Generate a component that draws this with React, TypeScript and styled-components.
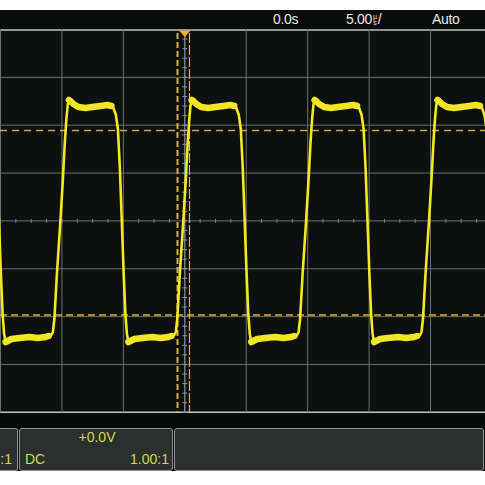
import React from "react";
import styled, { createGlobalStyle } from "styled-components";

const GlobalStyle = createGlobalStyle`
  html, body {
    margin: 0;
    padding: 0;
    background: #ffffff;
  }
`;

const SCREEN_W = 485;
const SCREEN_H = 385;
const DIV_X = 61.43;
const DIV_Y = 47.85;
const PERIOD = DIV_X * 2;

const StyledScope = styled.div`
  width: 485px;
  height: 485px;
  overflow: hidden;
  padding-top: 10px;
  box-sizing: border-box;
  background: #ffffff;
  font-family: "Liberation Sans", Arial, sans-serif;
`;

const StatusBar = styled.header`
  height: 19px;
  background: #0a0b0b;
  display: grid;
  grid-template-columns: 273px 73px 86px 1fr;
  align-items: center;
  color: #e8e8e8;
  font-size: 14px;
  line-height: 19px;

  > span {
    display: inline-flex;
    align-items: center;
    letter-spacing: -0.3px;
  }
`;

const UnitStack = styled.span`
  display: inline-flex;
  flex-direction: column;
  align-items: center;
  font-size: 7px;
  line-height: 6.5px;
  margin: 1px 1px 0 1px;
`;

const Screen = styled.svg`
  display: block;
  background: #0c100f;
`;

const Footer = styled.div`
  background: #080909;
  padding-top: 14px;
`;

const ChannelRow = styled.div`
  display: flex;
  gap: 1px;
  height: 43px;
`;

const ChannelBox = styled.div<{ $width?: number; $cut?: boolean }>`
  box-sizing: border-box;
  ${({ $width }) => ($width ? `width: ${$width}px;` : "flex: 1; margin-right: 1px;")}
  background: #2b2f2e;
  border: 1px solid #8d9292;
  border-left: ${({ $cut }) => ($cut ? "none" : "1px solid #8d9292")};
  border-radius: ${({ $cut }) => ($cut ? "0 3px 3px 0" : "3px")};
  color: #d4d84c;
  font-size: 14px;
  line-height: 14px;
  display: grid;
  grid-template-rows: 1fr 1fr;
  padding: ${({ $cut }) => ($cut ? "1px 5px 4px 0" : "1px 3px 4px 5px")};

  .offset {
    justify-self: center;
    align-self: start;
  }

  .coupling {
    display: flex;
    justify-content: space-between;
    align-items: end;
  }

  .probe {
    grid-row: 2;
    justify-self: end;
    align-self: end;
  }
`;

type Pt = [number, number];

// one period of the trace, x relative to the rising crossing
const risePts: Pt[] = [
  [-9, 306], [-7.5, 303], [-6, 290], [-3.5, 245], [0, 192], [2.5, 150],
  [4.5, 112], [6, 90], [7.3, 76], [8.5, 71],
];
const highPts: Pt[] = [
  [10, 72], [13, 75], [18, 78], [25, 79], [32, 78], [40, 77], [47, 76], [51, 77],
];
const fallPts: Pt[] = [
  [53, 79], [55.5, 86], [57.5, 100], [59.5, 140], [61.4, 192], [63.3, 245],
  [65, 285], [66.5, 305], [68, 313],
];
const lowPts: Pt[] = [
  [70, 312], [74, 310], [82, 309], [92, 308], [100, 309], [108, 308], [111, 307],
];

const toPath = (pts: Pt[]) =>
  pts.map(([x, y], i) => `${i ? "L" : "M"}${x.toFixed(1)} ${y}`).join(" ");

function buildTrace() {
  const all: Pt[] = [];
  const highs: string[] = [];
  const lows: string[] = [];
  for (let k = -1; k <= 4; k++) {
    const r = DIV_X - 1 + k * PERIOD;
    const shift = (pts: Pt[]) => pts.map(([x, y]) => [x + r, y] as Pt);
    all.push(...shift(risePts), ...shift(highPts), ...shift(fallPts), ...shift(lowPts));
    highs.push(toPath(shift([[8.5, 71], ...highPts])));
    lows.push(toPath(shift([[68, 313], ...lowPts])));
  }
  return { line: toPath(all), highs, lows };
}

const trace = buildTrace();

function Graticule() {
  const cx = 0.5 + 3 * DIV_X;
  const cy = 0.5 + 4 * DIV_Y;
  const vLines = Array.from({ length: 8 }, (_, i) => 0.5 + i * DIV_X);
  const hLines = Array.from({ length: 9 }, (_, i) => 0.5 + i * DIV_Y);
  const hTicks = Array.from({ length: 40 }, (_, i) => 0.5 + (i * DIV_X) / 4);
  const vTicks = Array.from({ length: 41 }, (_, i) => 0.5 + (i * DIV_Y) / 5);

  return (
    <g>
      {hLines.map((y, i) => (
        <line
          key={`h${i}`}
          x1={0}
          x2={SCREEN_W}
          y1={y + (i === 0 ? 0.5 : 0)}
          y2={y + (i === 0 ? 0.5 : 0)}
          stroke={i === 0 || i === 8 ? "#bfc3c3" : "#6a6f6f"}
          strokeWidth={i === 0 || i === 8 ? 1.6 : 1}
        />
      ))}
      {vLines.map((x, i) =>
        i === 3 ? null : (
          <line key={`v${i}`} x1={x} x2={x} y1={0} y2={hLines[8]} stroke="#6a6f6f" strokeWidth={1} />
        )
      )}
      <line x1={cx} x2={cx} y1={0} y2={hLines[8]} stroke="#8797a6" strokeWidth={1.2} />
      {hTicks.map((x, i) => (
        <line key={`ht${i}`} x1={x} x2={x} y1={cy - 2} y2={cy + 2} stroke="#7c8181" strokeWidth={1} />
      ))}
      {vTicks.map((y, i) => (
        <line key={`vt${i}`} x1={cx - 2.5} x2={cx + 2.5} y1={y} y2={y} stroke="#8797a6" strokeWidth={1} />
      ))}
    </g>
  );
}

function Cursors() {
  return (
    <g>
      <line x1={0} x2={SCREEN_W} y1={101.5} y2={101.5} stroke="#d9a24a" strokeWidth={1.4} strokeDasharray="7 5" />
      <line x1={0} x2={SCREEN_W} y1={286} y2={286} stroke="#e6ad2c" strokeWidth={1.6} strokeDasharray="7 4" />
      <line x1={177.5} x2={177.5} y1={4} y2={383} stroke="#d9b23c" strokeWidth={2} strokeDasharray="6 3" />
      <line x1={189.5} x2={189.5} y1={4} y2={383} stroke="#eaa866" strokeWidth={1.2} strokeDasharray="10 2" />
      {/* trigger position marker */}
      <polygon points="179,1.5 190.5,1.5 184.8,8" fill="#f2b12a" />
    </g>
  );
}

function Waveform() {
  return (
    <g fill="none" strokeLinejoin="round" strokeLinecap="round">
      <path d={trace.line} stroke="#f3ea22" strokeWidth={2.6} />
      {trace.highs.map((d, i) => (
        <path key={`hi${i}`} d={d} stroke="#f1e626" strokeWidth={6.5} />
      ))}
      {trace.lows.map((d, i) => (
        <path key={`lo${i}`} d={d} stroke="#f1e626" strokeWidth={6.5} />
      ))}
    </g>
  );
}

function App() {
  return (
    <>
      <GlobalStyle />
      <StyledScope>
        <StatusBar>
          <span />
          <span>0.0s</span>
          <span>
            5.00
            <UnitStack>
              <span>µ</span>
              <span>s</span>
            </UnitStack>
            /
          </span>
          <span>Auto</span>
        </StatusBar>
        <Screen width={SCREEN_W} height={SCREEN_H} viewBox={`0 0 ${SCREEN_W} ${SCREEN_H}`}>
          <Graticule />
          <Cursors />
          <Waveform />
        </Screen>
        <Footer>
          <ChannelRow>
            <ChannelBox $width={18} $cut>
              <span className="probe">:1</span>
            </ChannelBox>
            <ChannelBox $width={154}>
              <span className="offset">+0.0V</span>
              <div className="coupling">
                <span>DC</span>
                <span>1.00:1</span>
              </div>
            </ChannelBox>
            <ChannelBox />
          </ChannelRow>
        </Footer>
      </StyledScope>
    </>
  );
}

export default App;
